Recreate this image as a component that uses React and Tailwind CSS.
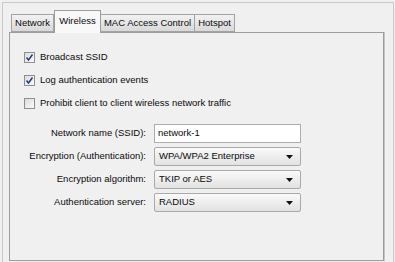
import React from 'react';

const tabs = [
  { label: 'Network', w: 'w-[43px]', active: false },
  { label: 'Wireless', w: 'w-[47px]', active: true },
  { label: 'MAC Access Control', w: 'w-[95px]', active: false },
  { label: 'Hotspot', w: 'w-[41px]', active: false },
];

const checks = [
  { label: 'Broadcast SSID', checked: true },
  { label: 'Log authentication events', checked: true },
  { label: 'Prohibit client to client wireless network traffic', checked: false },
];

const Checkbox = ({ checked }) => (
  <span className="flex h-[11px] w-[11px] items-center justify-center border border-[#8f8f8f] bg-gradient-to-br from-[#dcdcdc] to-[#fbfbfb]">
    {checked && (
      <svg width="9" height="9" viewBox="0 0 9 9">
        <path d="M1.5 4.5 L3.5 7 L7.5 1.5" fill="none" stroke="#253b84" strokeWidth="1.5" />
      </svg>
    )}
  </span>
);

const Select = ({ value }) => (
  <div className="flex h-[19px] w-[147px] items-center justify-between rounded-[2px] border border-[#a9a9a9] bg-gradient-to-b from-[#fafafa] to-[#e2e2e2] pl-[4px] pr-[7px]">
    <span>{value}</span>
    <svg width="7" height="4" viewBox="0 0 7 4">
      <path d="M0 0 H7 L3.5 4 Z" fill="#111" />
    </svg>
  </div>
);

const App = () => {
  return (
    <div className="h-[262px] w-[395px] overflow-hidden bg-[#f0f0f0] pl-[2px] pt-[2px] font-['Liberation_Sans',Arial,sans-serif] text-[9.5px] text-[#0a0a0a]">
      <div className="h-[270px] w-[392px] border border-[#c9c9c9] bg-[#f0f0f0] pl-[6px] pt-[7px]">
        {/* Tabs */}
        <div className="flex h-[22px] items-end pl-[2px]">
          {tabs.map(tab => (
            <div
              key={tab.label}
              className={
                tab.active
                  ? `${tab.w} relative z-10 -mb-[1px] flex h-[23px] items-center justify-center border border-b-0 border-[#9d9d9d] bg-[#f8f8f8] pb-[2px]`
                  : `${tab.w} -ml-[1px] flex h-[18px] items-center justify-center border border-[#a3a3a3] bg-gradient-to-b from-[#f2f2f2] to-[#d9d9d9] first:ml-0`
              }
            >
              {tab.label}
            </div>
          ))}
        </div>

        {/* Panel */}
        <div className="flex h-[229px] w-[375px] flex-col border border-[#9d9d9d] bg-[#f0f0f0] shadow-[1px_0_0_#c4c4c4,2px_0_0_#f5f5f5]">
          <div className="flex flex-col gap-[11px] pl-[14px] pt-[18px]">
            {checks.map(c => (
              <label key={c.label} className="flex h-[12px] items-center gap-[5px]">
                <Checkbox checked={c.checked} />
                <span>{c.label}</span>
              </label>
            ))}
          </div>

          <div className="mt-[15px] grid grid-cols-[136px_147px] items-center gap-x-[8px] gap-y-[4px]">
            <span className="text-right">Network name (SSID):</span>
            <div className="flex h-[19px] items-center border border-[#abadb3] bg-white pl-[3px]">network-1</div>

            <span className="text-right">Encryption (Authentication):</span>
            <Select value="WPA/WPA2 Enterprise" />

            <span className="text-right">Encryption algorithm:</span>
            <Select value="TKIP or AES" />

            <span className="text-right">Authentication server:</span>
            <Select value="RADIUS" />
          </div>
        </div>
      </div>
    </div>
  );
};

export default App;
